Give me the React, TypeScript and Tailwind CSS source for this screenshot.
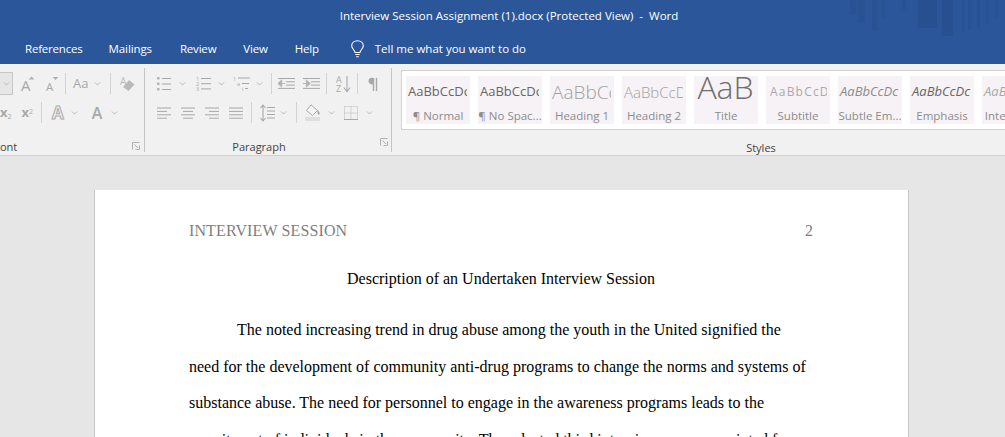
import React from "react";

const G = "#a8a8a8";

function Chev({ className = "" }: { className?: string }) {
  return (
    <svg width="7" height="4" viewBox="0 0 7 4" className={className}>
      <path d="M1 0.5 L3.5 3 L6 0.5" fill="none" stroke="#b8b8b8" strokeWidth="1" />
    </svg>
  );
}

function Sep({ className = "" }: { className?: string }) {
  return <div className={`w-px h-[21px] bg-[#d2d2d2] ${className}`} />;
}

// small launcher arrow at the corner of each ribbon group
function Launcher({ className = "" }: { className?: string }) {
  return (
    <svg width="8" height="8" viewBox="0 0 8 8" className={className}>
      <path d="M0.5 7.5 V0.5 H7.5 M7.5 3.5 V7.5 H3.5 M2.5 2.5 L6 6" fill="none" stroke="#b0b0b0" strokeWidth="1" />
    </svg>
  );
}

function SizeA({ grow }: { grow?: boolean }) {
  return grow ? (
    <svg width="15" height="16" viewBox="0 0 15 16">
      <text x="0" y="15" fontSize="15" fontFamily="Open Sans" fill={G}>A</text>
      <path d="M7.5 3.5 L10.5 0.5 L13.5 3.5 Z" fill="#b0b0b0" />
    </svg>
  ) : (
    <svg width="13" height="16" viewBox="0 0 13 16">
      <text x="0" y="15" fontSize="11.5" fontFamily="Open Sans" fill={G}>A</text>
      <path d="M6.5 1 L12.5 1 L9.5 4 Z" fill="#b0b0b0" />
    </svg>
  );
}

function Lines({ kind }: { kind: "left" | "center" | "right" | "justify" }) {
  const rows = [
    { left: 0, w: 14 },
    { left: kind === "center" ? 2 : kind === "right" ? 4 : 0, w: kind === "justify" ? 14 : 10 },
    { left: 0, w: 14 },
    { left: kind === "center" ? 2 : kind === "right" ? 4 : 0, w: kind === "justify" ? 14 : 10 },
  ];
  return (
    <svg width="15" height="12" viewBox="0 0 15 12">
      {rows.map((r, i) => (
        <rect key={i} x={r.left} y={i * 3.4 + 0.5} width={r.w} height="1" fill={G} />
      ))}
    </svg>
  );
}

function Bullets() {
  return (
    <svg width="14" height="14" viewBox="0 0 14 14">
      {[1, 6.5, 12].map((y) => (
        <g key={y}>
          <rect x="0" y={y - 1} width="2.5" height="2.5" fill="#b4b4b4" />
          <rect x="5" y={y} width="9" height="1" fill={G} />
        </g>
      ))}
    </svg>
  );
}

function Numbering() {
  return (
    <svg width="15" height="15" viewBox="0 0 15 15">
      {["1", "2", "3"].map((n, i) => (
        <g key={n}>
          <text x="0" y={4.5 + i * 5.2} fontSize="5.5" fontFamily="Open Sans" fill={G}>{n}</text>
          <rect x="5" y={2 + i * 5.2} width="10" height="1" fill={G} />
        </g>
      ))}
    </svg>
  );
}

function Multilevel() {
  return (
    <svg width="18" height="15" viewBox="0 0 18 15">
      <text x="0" y="4.5" fontSize="5.5" fontFamily="Open Sans" fill={G}>1</text>
      <rect x="5" y="1.5" width="12" height="1" fill={G} />
      <text x="4" y="9.5" fontSize="5.5" fontFamily="Open Sans" fill={G}>a</text>
      <rect x="9" y="7" width="7" height="1" fill={G} />
      <text x="9" y="14.5" fontSize="5.5" fontFamily="Open Sans" fill={G}>i</text>
      <rect x="12" y="12" width="3" height="1" fill={G} />
    </svg>
  );
}

function Indent({ flip = false }: { flip?: boolean }) {
  return (
    <svg width="17" height="13" viewBox="0 0 17 13">
      {[0.5, 3.8, 7.1, 10.4].map((y, i) => (
        <rect key={y} x={i === 0 || i === 3 ? 0 : 8} y={y + 0.5} width={i === 0 || i === 3 ? 17 : 9} height="1" fill={G} />
      ))}
      <path
        d={flip ? "M0 6.5 H5 M3.5 3.5 L7 6.5 L3.5 9.5 Z" : "M7 6.5 H2 M3.5 3.5 L0 6.5 L3.5 9.5 Z"}
        fill="#b4b4b4"
        stroke="#b4b4b4"
        strokeWidth="1.2"
      />
    </svg>
  );
}

function Sort() {
  return (
    <svg width="15" height="18" viewBox="0 0 15 18">
      <text x="0" y="8" fontSize="9" fontFamily="Open Sans" fill={G}>A</text>
      <text x="0" y="17" fontSize="9" fontFamily="Open Sans" fill={G}>Z</text>
      <path d="M11 1 V16 M7.8 12.5 L11 16.5 L14.2 12.5" fill="none" stroke={G} strokeWidth="1.1" />
    </svg>
  );
}

function Pilcrow() {
  return (
    <svg width="11" height="14" viewBox="0 0 11 14">
      <path d="M10.5 0.7 H4 C1.5 0.7 0.5 2.4 0.5 4 C0.5 6 2 7.5 4.3 7.5 H5 V0.7 Z" fill="#a8a8a8" />
      <path d="M5.5 1 V14 M8.5 1 V14" stroke="#a8a8a8" strokeWidth="1.4" />
    </svg>
  );
}

function LineSpacing() {
  return (
    <svg width="15" height="18" viewBox="0 0 15 18">
      <path d="M3 1 V17 M0.5 4 L3 1 L5.5 4 M0.5 14 L3 17 L5.5 14" fill="none" stroke={G} strokeWidth="1.1" />
      {[3, 6.5, 10, 13.5].map((y) => (
        <rect key={y} x="7" y={y} width="8" height="1" fill={G} />
      ))}
    </svg>
  );
}

function Fill() {
  return (
    <svg width="16" height="17" viewBox="0 0 16 17">
      <path d="M6 0.8 L12.5 6.5 L7.5 11.5 L1.5 6.5 Z" fill="#f4f4f4" stroke={G} strokeWidth="1" />
      <path d="M12.5 5.5 C14 7.5 15.5 9 14.3 10.5 C13.3 11.5 12 10 12.5 5.5Z" fill={G} />
      <rect x="0" y="13" width="15" height="4" fill="#dedede" />
    </svg>
  );
}

function Borders() {
  return (
    <svg width="14" height="14" viewBox="0 0 14 14">
      <path d="M0.5 0.5 H13.5 V13.5 M0.5 0.5 V13.5 M7 0.5 V13 M0.5 7 H13.5" fill="none" stroke="#b8b8b8" strokeWidth="1" strokeDasharray="1 1" />
      <rect x="0" y="13" width="14" height="1" fill="#a8a8a8" />
    </svg>
  );
}

function Eraser() {
  return (
    <svg width="15" height="16" viewBox="0 0 15 16" className="ml-[9px]">
      <text x="0" y="9" fontSize="10" fontFamily="Open Sans" fill="#bcbcbc">A</text>
      <path d="M9 4 L14.5 8.5 L8.5 15 L3 11 Z" fill="#bababa" />
    </svg>
  );
}

function Bulb() {
  return (
    <svg width="13" height="18" viewBox="0 0 13 18" className="ml-[32px]">
      <path
        d="M4 12.5 C3.8 10 0.7 8.7 0.7 5.8 C0.7 2.8 3.2 0.7 6.5 0.7 C9.8 0.7 12.3 2.8 12.3 5.8 C12.3 8.7 9.2 10 9 12.5 Z M4.3 14.5 H8.7 M5.2 16.7 H7.8"
        fill="none"
        stroke="#ffffff"
        strokeWidth="1.1"
      />
    </svg>
  );
}

function TitleBars() {
  const bars = [
    [10, 7, 14], [18, 7, 22], [32, 5, 31], [42, 3, 18], [62, 4, 10], [78, 19, 28],
    [102, 11, 36], [122, 2, 32], [128, 3, 30], [137, 3, 28], [146, 3, 24], [155, 3, 18],
  ];
  return (
    <svg width="165" height="40" viewBox="0 0 165 40" className="absolute top-0 left-[840px]">
      {bars.map(([x, w, h], i) => (
        <rect key={i} x={x} y={0} width={w} height={h} fill="#264f8e" opacity={w > 10 ? 0.85 : 0.6} />
      ))}
    </svg>
  );
}

function StyleCard({ sample, name, sampleClass }: { sample: string; name: string; sampleClass: string }) {
  return (
    <div className="w-[64px] h-[48px] shrink-0 bg-[#f6f2f6] flex flex-col items-center overflow-hidden">
      <div className={`h-[32px] shrink-0 w-[61px] self-start overflow-hidden whitespace-nowrap flex items-center pl-[2px] ${sampleClass}`}>{sample}</div>
      <div className="text-[11.5px] leading-[16px] text-[#8c8c8c] whitespace-nowrap">{name}</div>
    </div>
  );
}

const styles = [
  { sample: "AaBbCcDc", name: "¶ Normal", sampleClass: "text-[13px] text-[#666666]" },
  { sample: "AaBbCcDc", name: "¶ No Spac...", sampleClass: "text-[13px] text-[#666666]" },
  { sample: "AaBbCc", name: "Heading 1", sampleClass: "text-[19px] font-light text-[#a0a0a0]" },
  { sample: "AaBbCcD", name: "Heading 2", sampleClass: "text-[15px] font-light text-[#a0a0a0]" },
  { sample: "AaB", name: "Title", sampleClass: "text-[32px] font-light text-[#6e6e6e] leading-[30px] justify-center pl-0 pb-[10px]" },
  { sample: "AaBbCcD", name: "Subtitle", sampleClass: "text-[12px] tracking-[1.2px] text-[#a9a9a9] pl-[4px]" },
  { sample: "AaBbCcDc", name: "Subtle Em...", sampleClass: "text-[13px] italic text-[#8c8c8c]" },
  { sample: "AaBbCcDc", name: "Emphasis", sampleClass: "text-[13px] italic text-[#666666]" },
  { sample: "AaBbCcDc", name: "Intense E...", sampleClass: "text-[13px] italic text-[#a9a9a9]" },
];

const bodyLines = [
  "need for the development of community anti-drug programs to change the norms and systems of",
  "substance abuse. The need for personnel to engage in the awareness programs leads to the",
  "recruitment of individuals in the community. The selected third interviewee was appointed for",
];

export default function App() {
  return (
    <div className="relative w-[1005px] h-[437px] overflow-hidden bg-[#e6e6e6] font-['Open_Sans',sans-serif] flex flex-col">
      {/* Title bar and tabs */}
      <header className="relative h-[64px] shrink-0 bg-[#2b579a] text-white overflow-hidden">
        <TitleBars />
        <div className="h-[32px] flex items-center justify-center text-[11.5px] pl-[13px]">
          Interview Session Assignment (1).docx (Protected View)&nbsp; -&nbsp; Word
        </div>
        <nav className="h-[32px] flex items-center text-[11.5px] pl-[25px] pt-[2px]">
          <span className="tracking-[-0.2px]">References</span>
          <span className="ml-[26px] tracking-[-0.1px]">Mailings</span>
          <span className="ml-[28px] tracking-[-0.2px]">Review</span>
          <span className="ml-[27px] tracking-[-0.2px]">View</span>
          <span className="ml-[27px] tracking-[-0.2px]">Help</span>
          <Bulb />
          <span className="ml-[11px]">Tell me what you want to do</span>
        </nav>
      </header>

      {/* Ribbon */}
      <section className="h-[92px] shrink-0 bg-[#f1f1f1] border-b border-[#d2d2d2] flex text-[#a8a8a8] pt-[4px]">
        {/* Font group, cut off at the left */}
        <div className="relative w-[145px] h-[84px] shrink-0 border-r border-[#c4c4c4] flex flex-col">
          <div className="h-[32px] mt-[1px] flex items-center">
            <div className="w-[13px] h-[23px] border border-l-0 border-[#c6c6c6] bg-[#e6e6e6] flex items-center justify-center">
              <Chev />
            </div>
            <div className="ml-[8px]"><SizeA grow /></div>
            <div className="ml-[10px]"><SizeA /></div>
            <Sep className="ml-[6px]" />
            <span className="ml-[7px] text-[13px] leading-none">Aa</span>
            <Chev className="ml-[6px]" />
            <Sep className="ml-[9px]" />
            <Eraser />
          </div>
          <div className="h-[32px] flex items-center">
            <span className="text-[13px] font-bold leading-none">x<sub className="text-[7px] font-normal">2</sub></span>
            <span className="ml-[10px] text-[13px] font-bold leading-none">x<sup className="text-[7px] font-normal">2</sup></span>
            <Sep className="ml-[8px]" />
            <span className="ml-[10px] text-[17px] font-bold leading-none text-transparent [-webkit-text-stroke:1px_#aaaaaa]">A</span>
            <Chev className="ml-[7px]" />
            <span className="ml-[14px] text-[16px] font-semibold leading-none">A</span>
            <Chev className="ml-[9px]" />
          </div>
          <div className="flex-1 flex items-center justify-between pr-[4px] pt-[14px] text-[11px] text-[#444444] leading-none">
            <span>ont</span>
            <Launcher className="-mt-[2px]" />
          </div>
        </div>

        {/* Paragraph group */}
        <div className="w-[247px] h-[84px] shrink-0 border-r border-[#c4c4c4] flex flex-col">
          <div className="h-[32px] mt-[1px] flex items-center pl-[12px]">
            <Bullets />
            <Chev className="ml-[8px]" />
            <div className="ml-[10px]"><Numbering /></div>
            <Chev className="ml-[7px]" />
            <div className="ml-[8px]"><Multilevel /></div>
            <Chev className="ml-[5px]" />
            <Sep className="ml-[8px]" />
            <div className="ml-[6px]"><Indent /></div>
            <div className="ml-[8px]"><Indent flip /></div>
            <Sep className="ml-[6px]" />
            <div className="ml-[9px]"><Sort /></div>
            <Sep className="ml-[6px]" />
            <div className="ml-[10px]"><Pilcrow /></div>
          </div>
          <div className="h-[32px] flex items-center pl-[12px]">
            <Lines kind="left" />
            <div className="ml-[9px]"><Lines kind="center" /></div>
            <div className="ml-[9px]"><Lines kind="right" /></div>
            <div className="ml-[9px]"><Lines kind="justify" /></div>
            <Sep className="ml-[7px]" />
            <div className="ml-[8px]"><LineSpacing /></div>
            <Chev className="ml-[5px]" />
            <Sep className="ml-[9px]" />
            <div className="ml-[8px]"><Fill /></div>
            <Chev className="ml-[7px]" />
            <div className="ml-[9px]"><Borders /></div>
            <Chev className="ml-[8px]" />
          </div>
          <div className="relative flex-1 flex items-center justify-center pr-[18px] pt-[14px] text-[11px] text-[#444444] leading-none">
            <span>Paragraph</span>
            <Launcher className="absolute right-[3px] top-[11px]" />
          </div>
        </div>

        {/* Styles group */}
        <div className="flex-1 min-w-0 flex flex-col pl-[9px]">
          <div className="h-[60px] shrink-0 mt-[2px] bg-white border border-r-0 border-[#d2d2d2] flex gap-[8px] pl-[4px] pt-[5px] overflow-hidden">
            {styles.map((s) => (
              <StyleCard key={s.name} {...s} />
            ))}
          </div>
          <div className="flex-1 flex items-center justify-center pl-[116px] pt-[10px] text-[11px] text-[#444444] leading-none">
            Styles
          </div>
        </div>
      </section>

      {/* Document */}
      <main className="flex-1 min-h-0 pt-[34px] pl-[94px] overflow-hidden">
        <div className="w-[815px] h-[400px] bg-white border-x border-[#c6c6c6] pt-[31px] pl-[94px] pr-[95px] font-['Liberation_Serif',serif] text-[16px] text-black">
          <div className="flex justify-between leading-[20px] text-[#7f7f7f]">
            <span className="tracking-[0.12px]">INTERVIEW SESSION</span>
            <span>2</span>
          </div>
          <div className="mt-[26px] text-center leading-[24px]">Description of an Undertaken Interview Session</div>
          <div className="mt-[21px] leading-[36.67px] whitespace-nowrap">
            <div className="pl-[48px]">The noted increasing trend in drug abuse among the youth in the United signified the</div>
            {bodyLines.map((line) => (
              <div key={line}>{line}</div>
            ))}
          </div>
        </div>
      </main>
    </div>
  );
}
